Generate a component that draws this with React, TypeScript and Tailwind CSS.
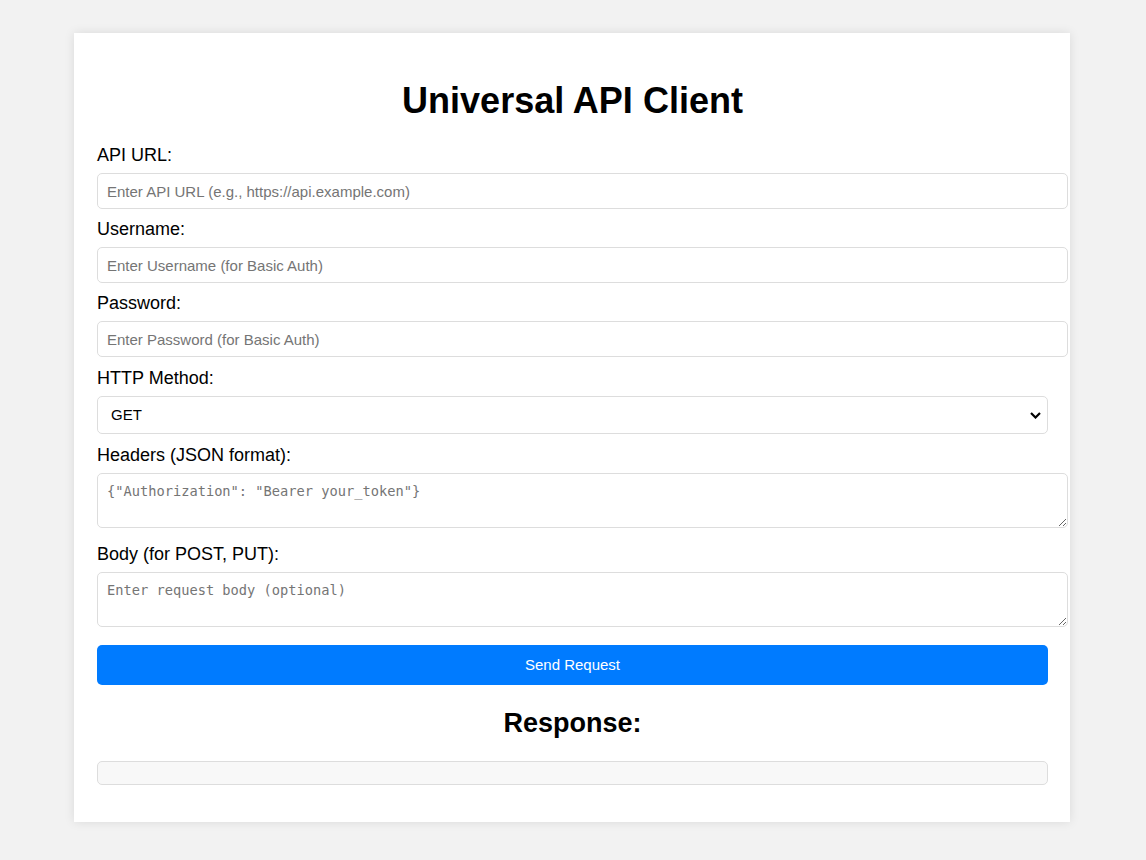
import React, { useState } from "react";

const font = { fontFamily: '"Liberation Sans", Arial, sans-serif' };

function Field({ label, children }: { label: string; children: React.ReactNode }) {
  return (
    <>
      <label className="block text-[18px] leading-[20px] mb-[8px] text-black">{label}</label>
      {children}
    </>
  );
}

export default function App() {
  const [url, setUrl] = useState("");
  const [user, setUser] = useState("");
  const [pass, setPass] = useState("");
  const [method, setMethod] = useState("GET");
  const [headers, setHeaders] = useState("");
  const [body, setBody] = useState("");
  const [response, setResponse] = useState("");

  const inputCls =
    "block w-[calc(100%+20px)] h-[36px] px-[9px] mb-[10px] text-[15px] border border-[#ddd] rounded-[5px] bg-white outline-none placeholder:text-[#757575]";
  const areaCls =
    "block w-[calc(100%+20px)] h-[55px] px-[9px] pt-[9px] text-[13.7px] leading-[17px] border border-[#ddd] rounded-[5px] bg-white outline-none resize-y placeholder:text-[#757575] [font-family:'DejaVu_Sans_Mono',monospace]";

  return (
    <div className="min-h-[860px] bg-[#f2f2f2] pt-[33px]" style={font}>
      <div className="w-[996px] ml-[74px] bg-white pl-[23px] pr-[22px] pt-[24px] pb-[23px] shadow-[0_0_10px_rgba(0,0,0,0.1)]">
        <h1 className="text-center text-[36px] leading-[40px] font-bold mt-[24px] mb-[24px] text-black">
          Universal API Client
        </h1>

        <Field label="API URL:">
          <input
            className={inputCls}
            placeholder="Enter API URL (e.g., https://api.example.com)"
            value={url}
            onChange={(e) => setUrl(e.target.value)}
          />
        </Field>
        <Field label="Username:">
          <input
            className={inputCls}
            placeholder="Enter Username (for Basic Auth)"
            value={user}
            onChange={(e) => setUser(e.target.value)}
          />
        </Field>
        <Field label="Password:">
          <input
            type="password"
            className={inputCls + " mb-[11px]"}
            placeholder="Enter Password (for Basic Auth)"
            value={pass}
            onChange={(e) => setPass(e.target.value)}
          />
        </Field>
        <Field label="HTTP Method:">
          <div className="relative mb-[11px]">
            <select
              className="block w-full h-[38px] pl-[13px] pr-[30px] text-[15px] text-black border border-[#ddd] rounded-[5px] bg-white appearance-none outline-none"
              value={method}
              onChange={(e) => setMethod(e.target.value)}
            >
              {["GET", "POST", "PUT", "DELETE"].map((m) => (
                <option key={m} value={m}>{m}</option>
              ))}
            </select>
            <svg
              className="absolute right-[7px] top-[16px] pointer-events-none"
              width="11"
              height="7"
              viewBox="0 0 11 7"
            >
              <path d="M1 1 L5.5 5.5 L10 1" fill="none" stroke="#000" strokeWidth="2.2" />
            </svg>
          </div>
        </Field>
        <Field label="Headers (JSON format):">
          <textarea
            className={areaCls + " mb-[16px]"}
            placeholder={'{"Authorization": "Bearer your_token"}'}
            value={headers}
            onChange={(e) => setHeaders(e.target.value)}
          />
        </Field>
        <Field label="Body (for POST, PUT):">
          <textarea
            className={areaCls + " mb-[18px]"}
            placeholder="Enter request body (optional)"
            value={body}
            onChange={(e) => setBody(e.target.value)}
          />
        </Field>

        <button
          className="block w-full h-[40px] bg-[#007bff] text-white text-[15px] rounded-[5px]"
          onClick={() => setResponse(`${method} ${url}`)}
        >
          Send Request
        </button>

        <h2 className="text-center text-[27px] leading-[30px] font-bold mt-[23px] mb-[23px] text-black">
          Response:
        </h2>
        <pre className="h-[24px] px-[10px] mb-[14px] bg-[#f8f8f8] border border-[#ddd] rounded-[5px] text-[13px] overflow-auto">
          {response}
        </pre>
      </div>
    </div>
  );
}
